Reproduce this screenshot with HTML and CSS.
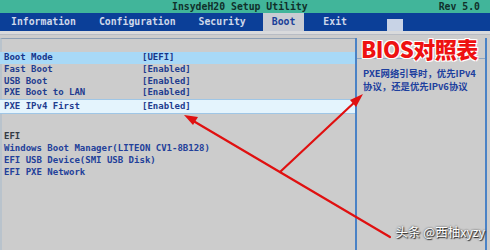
FILE: index.html
```html
<!DOCTYPE html>
<html lang="zh-CN">
<head>
    <meta charset="UTF-8">
    <title>InsydeH20 Setup Utility</title>
    <link rel="stylesheet" href="styles.css">
</head>
<body>
    <div class="screen">
        <!-- Заголовок -->
        <div class="title-bar">
            <span class="title">InsydeH20 Setup Utility</span>
            <span class="rev">Rev 5.0</span>
        </div>

        <!-- Меню вкладок -->
        <div class="nav">
            <span class="tab">Information</span>
            <span class="tab">Configuration</span>
            <span class="tab">Security</span>
            <span class="tab active">Boot</span>
            <span class="tab">Exit</span>
            <span class="nav-box"></span>
        </div>

        <div class="strip"></div>

        <div class="main">
            <div class="left">
                <div class="left-head"></div>
                <div class="row selected"><span class="key">Boot Mode</span><span class="val">[UEFI]</span></div>
                <div class="row"><span class="key">Fast Boot</span><span class="val">[Enabled]</span></div>
                <div class="row"><span class="key">USB Boot</span><span class="val">[Enabled]</span></div>
                <div class="row"><span class="key">PXE Boot to LAN</span><span class="val">[Enabled]</span></div>
                <div class="row current"><span class="key">PXE IPv4 First</span><span class="val">[Enabled]</span></div>

                <div class="group">
                    <div class="group-title">EFI</div>
                    <div class="item">Windows Boot Manager(LITEON CV1-8B128)</div>
                    <div class="item">EFI USB Device(SMI USB Disk)</div>
                    <div class="item">EFI PXE Network</div>
                </div>
            </div>

            <div class="help">
                <div class="help-head">BIOS对照表</div>
                <div class="help-text">PXE网络引导时，优先IPv4<br>协议，还是优先IPv6协议</div>
            </div>
        </div>

        <!-- Стрелки поверх экрана -->
        <svg class="arrows" width="490" height="250" viewBox="0 0 490 250">
            <g stroke="#e01010" stroke-width="2.2" fill="none" stroke-linecap="round">
                <line x1="390" y1="237" x2="190" y2="119"/>
                <line x1="280" y1="172" x2="358" y2="99"/>
            </g>
            <polygon points="184,115 198,117 193,125" fill="#e01010"/>
            <polygon points="363,94 356,107 350,100" fill="#e01010"/>
        </svg>

        <div class="watermark">头条 @西柚xyzy</div>
    </div>
</body>
</html>
```

FILE: styles.css
```css
/* Основные стили */
body {
    margin: 0;
    background: #cccccc;
}

.screen {
    position: relative;
    width: 490px;
    height: 250px;
    overflow: hidden;
    background: #cccccc;
    font-family: 'DejaVu Sans Mono', 'Liberation Mono', monospace;
    font-weight: bold;
}

.title-bar {
    height: 13px;
    background: #41b59a;
    color: #10302a;
    font-size: 9.8px;
    line-height: 13px;
    display: flex;
    padding: 0 10px 0 172px;
    justify-content: space-between;
}

.nav {
    height: 18px;
    background: #0b3f98;
    display: flex;
    padding-left: 1px;
    font-size: 9.8px;
    line-height: 18px;
    color: #cfd8ea;
}

.tab {
    padding: 0 9px 0 10px;
    margin-right: 4px;
}

.tab.active {
    background: #c9ccd3;
    color: #1a3f99;
    margin-left: 4px;
    padding: 0 9px;
    margin-right: 9px;
}

.nav-box {
    width: 16px;
    height: 12px;
    margin: 6px 0 0 27px;
    background: #c8d3e6;
}

.strip {
    height: 3px;
    background: #d9dadc;
    border-bottom: 1px solid #b8bcc4;
}

.main {
    display: flex;
    height: 215px;
    padding-top: 3px;
}

.left {
    width: 351px;
    border-left: 2px solid #b9c3cc;
    padding-left: 2px;
    border-top: 1px solid #8d9fb4;
}

.left-head {
    height: 13px;
}

.row {
    display: flex;
    height: 11.8px;
    line-height: 11.8px;
    font-size: 9px;
    color: #1f3c8f;
    margin-left: -4px;
    padding-left: 4px;
}

.row.selected {
    background: #a8d9f7;
    color: #16358a;
}

.row.current {
    background: #e4f4fd;
    height: 13px;
    line-height: 13px;
    border-top: 1px solid #9fc6e6;
    border-bottom: 1px solid #9fc6e6;
}

.key {
    width: 138px;
}

.group {
    margin-top: 16px;
    font-size: 9px;
    line-height: 12px;
}

.group-title {
    color: #333a44;
}

.item {
    color: #22409a;
}

.help {
    width: 128px;
    border-left: 2px solid #4a82c6;
    border-right: 2px solid #4a82c6;
    font-family: 'Noto Sans CJK SC', sans-serif;
}

.help-head {
    height: 20px;
    border-bottom: 1px solid #8fa5c0;
    color: #ee1111;
    font-size: 22px;
    line-height: 21px;
    font-weight: 900;
    padding-left: 4px;
    letter-spacing: -0.5px;
    white-space: nowrap;
    text-shadow: 1px 1px 0 #fff, -1px -1px 0 #fff, 1px -1px 0 #fff, -1px 1px 0 #fff;
}

.help-text {
    padding: 8px 0 0 6px;
    font-size: 9.4px;
    line-height: 13px;
    font-weight: bold;
    color: #1d3f9e;
}

/* Стрелки и подпись поверх скриншота */
.arrows {
    position: absolute;
    top: 0;
    left: 0;
}

.watermark {
    position: absolute;
    right: 5px;
    bottom: 9px;
    color: #fff;
    font-family: 'Noto Sans CJK SC', sans-serif;
    font-weight: normal;
    font-size: 12.5px;
    text-shadow: 0 0 2px #333, 1px 1px 1px #222;
}
```
